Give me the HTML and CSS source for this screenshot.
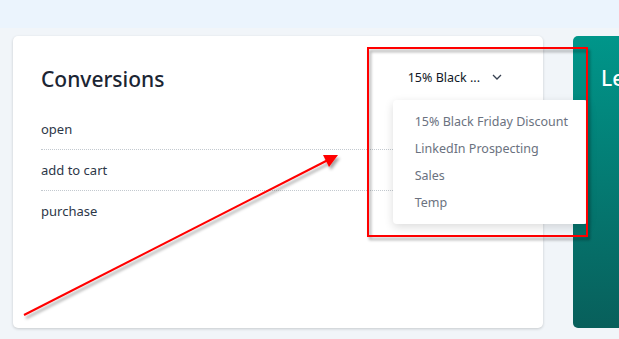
FILE: index.html
```html
<!DOCTYPE HTML>
<html>
<head>
<meta charset="utf-8">
<title>Conversions</title>
<link rel="stylesheet" href="styles.css">
</head>
<body>
	<div class="topbar"></div>
	<div class="main">
		<div class="card">
			<div class="card-head">
				<h2 class="title">Conversions</h2>
				<div class="picker">
					<div class="picker-btn">
						<span class="picker-label">15% Black ...</span>
						<svg class="chevron" width="10" height="6" viewBox="0 0 10 6"><path d="M1 1l4 4 4-4" fill="none" stroke="#374151" stroke-width="1.3"/></svg>
					</div>
					<ul class="picker-menu">
						<li>15% Black Friday Discount</li>
						<li>LinkedIn Prospecting</li>
						<li>Sales</li>
						<li>Temp</li>
					</ul>
				</div>
			</div>
			<ul class="events">
				<li>open</li>
				<li>add to cart</li>
				<li>purchase</li>
			</ul>
		</div>
		<div class="card teal">
			<h2 class="teal-title">Le</h2>
		</div>
	</div>
	<!-- annotation layer -->
	<svg class="notes" width="619" height="339" viewBox="0 0 619 339">
		<defs>
			<filter id="shade" x="-10%" y="-10%" width="120%" height="120%">
				<feDropShadow dx="2" dy="3" stdDeviation="1.5" flood-color="#000" flood-opacity="0.35"/>
			</filter>
		</defs>
		<g filter="url(#shade)">
			<rect x="368" y="48" width="219" height="188" fill="none" stroke="#f00" stroke-width="2"/>
			<line x1="24" y1="315" x2="328" y2="160" stroke="#f00" stroke-width="2"/>
			<path d="M338 155 L323 155 L329 167 Z" fill="#f00"/>
		</g>
	</svg>
</body>
</html>
```

FILE: styles.css
```css
* {
	margin: 0;
	padding: 0;
}

ul,ol {
	list-style: none;
}

body {
	background: #f1f5f9;
	font-family: "Noto Sans", "Open Sans", sans-serif;
	overflow: hidden;
	position: relative;
	height: 339px;
}

.topbar {
	height: 28px;
	background: #ebf4fd;
}

.main {
	display: flex;
	gap: 30px;
	padding: 8px 0 0 13px;
}

.card {
	flex: 0 0 530px;
	height: 292px;
	box-sizing: border-box;
	padding: 28px;
	background: #fff;
	border-radius: 5px;
	box-shadow: 0 1px 3px rgba(0,0,0,0.18);
}

.card-head {
	display: flex;
	justify-content: space-between;
	align-items: center;
	height: 30px;
	margin-bottom: 15px;
}

.title {
	font-size: 21px;
	font-weight: 500;
	color: #1b2533;
}

.picker {
	position: relative;
	margin-right: 13px;
	margin-top: -4px;
}

.picker-btn {
	display: flex;
	align-items: center;
	gap: 12px;
	font-size: 12.5px;
	color: #111827;
}

.picker-menu {
	position: absolute;
	top: 31px;
	left: -15px;
	width: 195px;
	box-sizing: border-box;
	padding: 8px 0 8px 22px;
	background: #fff;
	border-radius: 4px;
	box-shadow: 0 3px 10px rgba(0,0,0,0.14);
	z-index: 2;
}

.picker-menu li {
	font-size: 12.5px;
	line-height: 27px;
	color: #6b7280;
}

.events li {
	height: 40px;
	line-height: 40px;
	font-size: 13px;
	color: #2d3748;
	border-bottom: 1px dotted #c3c9cf;
}

.events li:last-child {
	border-bottom: none;
}

.teal {
	flex: 0 0 46px;
	padding-right: 0;
	background: linear-gradient(#00968a, #085f5b);
	box-shadow: none;
	border-radius: 5px 0 0 5px;
}

.teal-title {
	font-size: 21px;
	font-weight: 500;
	color: #fff;
	white-space: nowrap;
}

.notes {
	position: absolute;
	left: 0;
	top: 0;
	z-index: 5;
}
```
